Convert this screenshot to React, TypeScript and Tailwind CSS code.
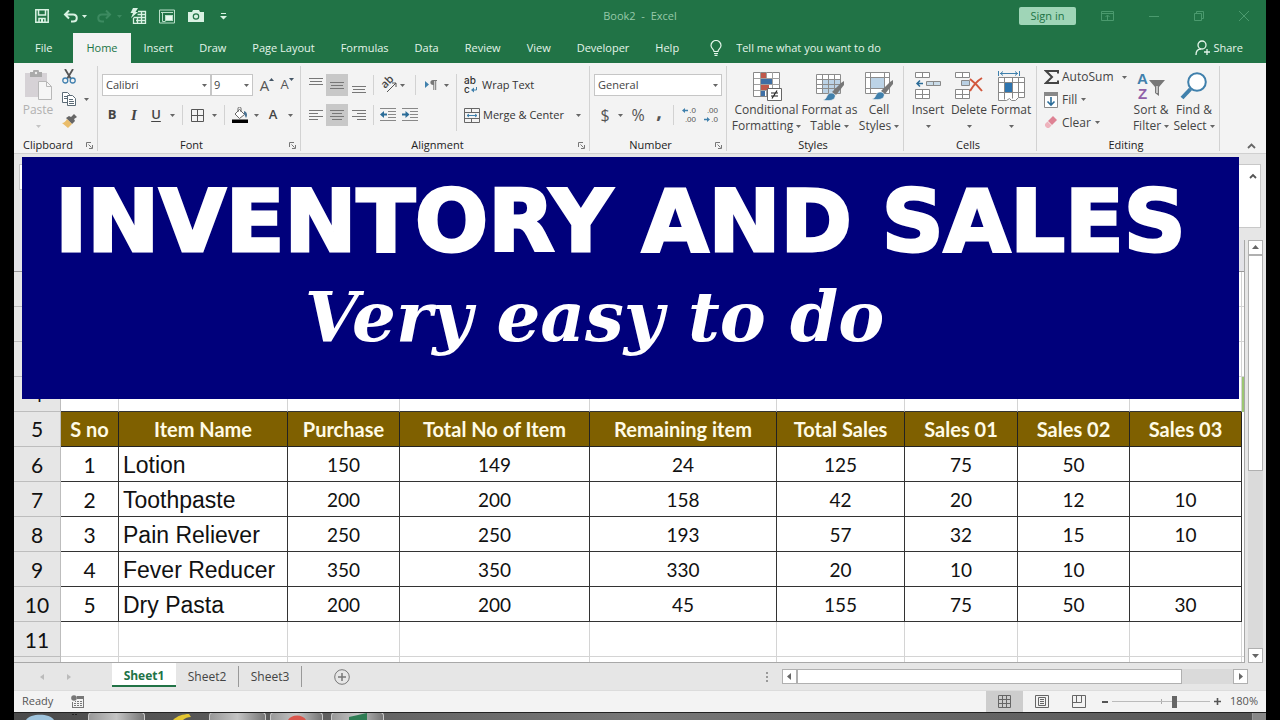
import React from "react";
import clsx from "clsx";

type Row = { no: number; sno: string; item: string; values: string[] };

const tabs = ["File", "Home", "Insert", "Draw", "Page Layout", "Formulas", "Data", "Review", "View", "Developer", "Help"];

const headers = ["S no", "Item Name", "Purchase", "Total No of Item", "Remaining item", "Total Sales", "Sales 01", "Sales 02", "Sales 03"];

const rows: Row[] = [
  { no: 6, sno: "1", item: "Lotion", values: ["150", "149", "24", "125", "75", "50", ""] },
  { no: 7, sno: "2", item: "Toothpaste", values: ["200", "200", "158", "42", "20", "12", "10"] },
  { no: 8, sno: "3", item: "Pain Reliever", values: ["250", "250", "193", "57", "32", "15", "10"] },
  { no: 9, sno: "4", item: "Fever Reducer", values: ["350", "350", "330", "20", "10", "10", ""] },
  { no: 10, sno: "5", item: "Dry Pasta", values: ["200", "200", "45", "155", "75", "50", "30"] },
];

function Caret({ className = "text-[#666]" }: { className?: string }) {
  return (
    <svg width="5" height="3" viewBox="0 0 5 3" className={clsx("shrink-0", className)}>
      <path d="M0 0h5L2.5 3z" fill="currentColor" />
    </svg>
  );
}

function CaretButton({ label, className }: { label: string; className: string }) {
  return (
    <button aria-label={label} className={clsx("flex h-full items-center justify-center", className)}>
      <Caret />
    </button>
  );
}

function Tool({ label, className, children }: { label: string; className?: string; children: React.ReactNode }) {
  return (
    <button aria-label={label} className={clsx("flex h-full shrink-0 items-center justify-center", className)}>
      {children}
    </button>
  );
}

function Group({ label, className, launcher, children }: { label: string; className: string; launcher?: boolean; children: React.ReactNode }) {
  return (
    <section aria-label={label} className={clsx("flex shrink-0 flex-col", className)}>
      <div className="flex flex-1 border-r border-[#d2d2d2]">{children}</div>
      <div className="flex h-3 items-center border-r border-[#d2d2d2] pr-1">
        <span className={clsx("flex-1 text-center leading-4 text-[#222]", launcher && "pr-1")}>{label}</span>
        {launcher && (
          <button aria-label={label + " settings"}>
            <svg width="7" height="7" viewBox="0 0 7 7" fill="none" stroke="#777">
              <path d="M.5 5V.5H5M2.5 2.5l3 3M6.5 3v3.5H3" />
            </svg>
          </button>
        )}
      </div>
    </section>
  );
}

function BigButton({ lines, className, icon }: { lines: string[]; className: string; icon: React.ReactNode }) {
  return (
    <button className={clsx("flex shrink-0 flex-col items-center whitespace-nowrap text-[12px] text-[#444]", className)}>
      <span className="flex h-8 items-center">{icon}</span>
      <span className="leading-4">{lines[0]}</span>
      <span className="flex h-4 items-center gap-[3px] leading-4">
        {lines[1]}
        <Caret />
      </span>
    </button>
  );
}

function Lines({ widths, align }: { widths: number[]; align: "l" | "c" | "r" }) {
  return (
    <svg width="14" height={widths.length * 3} viewBox={`0 0 14 ${widths.length * 3}`} stroke="#777">
      {widths.map((w, i) => {
        const x = align === "l" ? 0 : align === "r" ? 14 - w : (14 - w) / 2;
        return <path key={i} d={`M${x} ${i * 3 + 1.5}h${w}`} />;
      })}
    </svg>
  );
}

function Indent({ flip }: { flip?: boolean }) {
  return (
    <svg width="16" height="14" viewBox="0 0 16 14" fill="none">
      <path d="M0 .5h16M8 3.5h8M8 6.5h8M8 9.5h8M0 12.5h16" stroke="#888" />
      <path d={flip ? "M0 6.5h5" : "M2 6.5h5"} stroke="#2b6c98" strokeWidth="2" />
      <path d={flip ? "M3.5 3v7L7.5 6.5z" : "M4 3v7L0 6.5z"} fill="#2b6c98" />
    </svg>
  );
}

function Brush({ x, y }: { x: number; y: number }) {
  return (
    <g transform={`translate(${x} ${y})`}>
      <path d="M21 0v4l-8 10-4-3L18 2z" fill="#777" />
      <path d="M8 12c3 0 5 2 4 4-1 4-7 4-12 3 3-1 3-2 4-4 1-2 2-3 4-3z" fill="#4080ac" stroke="#f3f3f3" strokeWidth=".6" />
    </g>
  );
}

function TitleBar() {
  return (
    <header className="grid h-8 shrink-0 grid-cols-[1fr_auto_1fr] items-center text-white">
      <div className="flex items-center pl-[21px]">
        <Tool label="Save">
          <svg width="14" height="14" viewBox="0 0 14 14" fill="none" stroke="#d9f2e3" strokeWidth="1.5">
            <path d="M.8.8h12.4v12.4H.8zM3.5 1v5h7V1M4 13V9.5h6V13" />
            <path d="M7 10v3" strokeWidth="2" />
          </svg>
        </Tool>
        <Tool label="Undo" className="ml-[14px] gap-1">
          <svg width="15" height="13" viewBox="0 0 15 13" fill="none" stroke="#d9f2e3" strokeWidth="2">
            <path d="M1.5 4.5h8.5c5 0 5 7 0 7H8M6 .5L2 4.5l4 4" />
          </svg>
          <Caret className="text-[#d9f2e3]" />
        </Tool>
        <Tool label="Redo" className="ml-[10px] gap-[5px]">
          <svg width="15" height="13" viewBox="0 0 15 13" fill="none" stroke="#3c8a60" strokeWidth="2">
            <path d="M13.5 4.5H5c-5 0-5 7 0 7h2M9 .5l4 4-4 4" />
          </svg>
          <Caret className="text-[#3c8a60]" />
        </Tool>
        <Tool label="Calculate now" className="ml-2">
          <svg width="17" height="16" viewBox="0 0 17 16" fill="none" stroke="#d9f2e3">
            <path d="M8 3.5h7.5v12h-12V10M3.5 9.5h12M6 12.5h9.5M7.5 6.5h8M7.5 9v6.5M11.5 3.5v12" strokeWidth="1.3" />
            <path d="M3 0h5L5.5 4H8L1 10l2-5H.5z" fill="#d9f2e3" stroke="none" />
          </svg>
        </Tool>
        <Tool label="Form" className="ml-3">
          <svg width="16" height="15" viewBox="0 0 16 15" fill="none" stroke="#b9dfc8">
            <path d="M.5 1h15v13H.5zM2 3.5h12M3.5 3.5v9h3" />
            <rect x="6.500" y="6.500" width="7" height="5" fill="#e8f8ee" />
          </svg>
        </Tool>
        <Tool label="Camera" className="ml-[13px]">
          <svg width="16" height="12" viewBox="0 0 16 12">
            <path d="M0 2h4l1-2h6l1 2h4v10H0z" fill="#d9f2e3" />
            <circle cx="8" cy="6.5" r="2.7" fill="#d9f2e3" stroke="#217346" strokeWidth="1.2" />
          </svg>
        </Tool>
        <Tool label="Customize quick access toolbar" className="ml-4">
          <svg width="7" height="7" viewBox="0 0 7 7" fill="#d9f2e3">
            <path d="M1 0h5v1H1zM0 3h7L3.5 6.5z" />
          </svg>
        </Tool>
      </div>
      <h1 className="whitespace-pre text-[#96c9a9]">Book2  -  Excel</h1>
      <div className="flex items-center justify-end pr-[17px] text-[#4b9a6e]">
        <button className="mr-[25px] h-[18px] w-[57px] rounded-xs bg-[#9fd5b7] leading-4 text-[#217346]">Sign in</button>
        <Tool label="Ribbon display options" className="mr-[35px]">
          <svg width="13" height="10" viewBox="0 0 13 10" fill="none" stroke="currentColor">
            <path d="M.5.5h12v9H.5zM.5 2.5h12M6.5 9V4.5M4.5 6l2-2 2 2" />
          </svg>
        </Tool>
        <Tool label="Minimize" className="mr-[35px]">
          <svg width="10" height="10" viewBox="0 0 10 10" stroke="currentColor">
            <path d="M0 5.5h10" />
          </svg>
        </Tool>
        <Tool label="Restore" className="mr-[35px]">
          <svg width="10" height="10" viewBox="0 0 10 10" fill="none" stroke="currentColor">
            <path d="M.5 2.5h7v7h-7zM2.5 2.5v-2h7v7h-2" />
          </svg>
        </Tool>
        <Tool label="Close">
          <svg width="10" height="10" viewBox="0 0 10 10" stroke="currentColor">
            <path d="M0 0l10 10M10 0L0 10" />
          </svg>
        </Tool>
      </div>
    </header>
  );
}

function TabBar() {
  return (
    <nav className="flex h-[31px] shrink-0 items-end pl-2 pr-[23px] text-[#e4f5ea]">
      {tabs.map((tab) => (
        <button
          key={tab}
          className={clsx(
            "h-[30px] whitespace-nowrap px-[13px]",
            tab === "Home" && "bg-[#f3f3f3] text-[#217346]",
            tab === "File" && "mr-2"
          )}
        >
          {tab}
        </button>
      ))}
      <label className="ml-[18px] flex h-[30px] flex-1 items-center gap-[14px]">
        <svg width="12" height="16" viewBox="0 0 12 16" fill="none" stroke="#e4f5ea" strokeWidth="1.2">
          <path d="M4 11.5C4 9 1 8.5 1 5.5a5 5 0 0 1 10 0c0 3-3 3.5-3 6zM4 13.5h4M4.5 15.3h3" />
        </svg>
        <input
          aria-label="Tell me what you want to do"
          placeholder="Tell me what you want to do"
          className="flex-1 bg-transparent font-medium outline-none placeholder:text-[#e4f5ea]"
        />
      </label>
      <button className="flex h-[30px] items-center gap-[3px]">
        <svg width="15" height="16" viewBox="0 0 15 16" fill="none" stroke="#e4f5ea" strokeWidth="1.3">
          <circle cx="7" cy="5" r="4" />
          <path d="M1 15c0-4 2-6 5-6M9 12h6M12 9v6" />
        </svg>
        Share
      </button>
    </nav>
  );
}

function ClipboardGroup() {
  return (
    <Group label="Clipboard" className="w-[84px]" launcher>
      <button className="flex w-[48px] flex-col items-center pt-1 text-[12px] text-[#b1b1b1]">
        <svg width="28" height="30" viewBox="0 0 28 30">
          <path d="M1 3h22v24H1z" fill="#d6d2d6" />
          <path d="M6 2h3a3 3 0 0 1 6 0h3v5H6z" fill="#aaa" />
          <circle cx="12" cy="3" r="1.2" fill="#eee" />
          <path d="M14.5 11.5h8l5 5v13h-13z" fill="#f6f6f6" stroke="#b8b8b8" />
          <path d="M22.5 11.5v5h5" fill="none" stroke="#b8b8b8" />
        </svg>
        <span className="mt-[2px] leading-4">Paste</span>
        <span className="flex h-4 items-center">
          <Caret className="text-[#c4c4c4]" />
        </span>
      </button>
      <div className="flex flex-col gap-2 pt-[3px]">
        <Tool label="Cut" className="h-[15px]! w-[14px]">
          <svg width="14" height="15" viewBox="0 0 14 15" fill="none">
            <path d="M3 0l6 10M11 0L5 10" stroke="#555" strokeWidth="1.8" />
            <circle cx="3.3" cy="11.5" r="2.5" stroke="#3f7fae" strokeWidth="1.3" />
            <circle cx="10.7" cy="11.5" r="2.5" stroke="#3f7fae" strokeWidth="1.3" />
          </svg>
        </Tool>
        <div className="flex items-center gap-2">
          <Tool label="Copy">
            <svg width="14" height="14" viewBox="0 0 14 14" fill="#fff" stroke="#5b6b76">
              <path d="M.5.5h5l2 2v8h-7zM2 4.5h3M2 6.5h3" />
              <path d="M5.5 3.5h5l3 3v7h-8zM7 7.5h4M7 9.5h5M7 11.5h5" />
            </svg>
          </Tool>
          <CaretButton label="Copy options" className="w-1" />
        </div>
        <Tool label="Format painter" className="h-[14px]! w-[15px]">
          <svg width="15" height="14" viewBox="0 0 15 14">
            <path d="M12 0l3 3-3 2 1 2-3 3-6-6 3-2 2 1z" fill="#666" />
            <path d="M5 5l5 5-4 4-6-5c2 0 4-2 5-4z" fill="#eabd6b" />
          </svg>
        </Tool>
      </div>
    </Group>
  );
}

function FontGroup() {
  return (
    <Group label="Font" className="w-[203px]" launcher>
      <div className="flex flex-col gap-2 pl-1 pt-2">
        <div className="flex h-[22px] items-center">
          <span className="relative flex items-center">
            <select aria-label="Font name" className="h-[22px] w-[109px] appearance-none border border-[#c6c6c6] bg-white px-[3px] text-[#444]">
              <option>Calibri</option>
            </select>
            <Caret className="pointer-events-none absolute right-1 text-[#666]" />
          </span>
          <span className="relative flex items-center">
            <select aria-label="Font size" className="h-[22px] w-[42px] appearance-none border border-[#c6c6c6] bg-white px-[2px] text-[#444]">
              <option>9</option>
            </select>
            <Caret className="pointer-events-none absolute right-1 text-[#666]" />
          </span>
          <Tool label="Increase font size" className="w-6 pl-1 text-[15px] text-[#555]">
            A
            <svg width="5" height="3" viewBox="0 0 5 3" className="mb-3">
              <path d="M0 3h5L2.5 0z" fill="#456" />
            </svg>
          </Tool>
          <Tool label="Decrease font size" className="w-5 text-[13px] text-[#555]">
            A
            <Caret className="mb-3 text-[#456]" />
          </Tool>
        </div>
        <div className="flex h-[22px] items-center text-[13px] text-[#444]">
          <Tool label="Bold" className="w-5 font-bold">B</Tool>
          <Tool label="Italic" className="w-6">
            <i className="font-['Liberation_Serif',serif] text-[15px] font-bold">I</i>
          </Tool>
          <Tool label="Underline" className="w-5 font-semibold underline underline-offset-2">U</Tool>
          <CaretButton label="Underline styles" className="w-3" />
          <span className="mx-1 h-5 w-px bg-[#d2d2d2]" />
          <Tool label="Borders" className="w-5">
            <svg width="13" height="13" viewBox="0 0 13 13" fill="none" stroke="#555">
              <path d="M.5.5h12v12H.5zM6.5 0v13M0 6.5h13" />
            </svg>
          </Tool>
          <CaretButton label="Border styles" className="w-[14px]" />
          <span className="mx-[3px] h-5 w-px bg-[#d2d2d2]" />
          <Tool label="Fill color" className="w-6">
            <svg width="16" height="16" viewBox="0 0 16 16" fill="none">
              <path d="M7.5 2.5l5 5-5 4-4.5-4.5z" fill="#fff" stroke="#666" />
              <path d="M6 5V1.5c0-2 3-2 3 0V5" stroke="#666" />
              <path d="M12 4c3 1 4 4 2 7-1-2-1-3-2-4z" fill="#4a7394" />
              <path d="M0 12.5h16V16H0z" fill="#000" />
            </svg>
          </Tool>
          <CaretButton label="Fill colors" className="w-2" />
          <Tool label="Font color" className="w-[26px] font-semibold">A</Tool>
          <CaretButton label="Font colors" className="w-2" />
        </div>
      </div>
    </Group>
  );
}

function AlignmentGroup() {
  return (
    <Group label="Alignment" className="w-[289px]" launcher>
      <div className="my-2 flex w-[156px] flex-col gap-2 border-r border-[#d2d2d2] pl-1">
        <div className="flex h-[22px] items-center">
          <Tool label="Top align" className="w-[21px] pb-2"><Lines widths={[14, 12, 14]} align="c" /></Tool>
          <Tool label="Middle align" className="w-[22px] bg-[#c8c8c8]"><Lines widths={[14, 12, 14]} align="c" /></Tool>
          <Tool label="Bottom align" className="w-[21px] pt-2"><Lines widths={[14, 12, 14]} align="c" /></Tool>
          <span className="ml-1 mr-[6px] h-5 w-px bg-[#d2d2d2]" />
          <Tool label="Orientation" className="w-4">
            <svg width="17" height="16" viewBox="0 0 17 16" fill="none" className="overflow-visible">
              <text x="0" y="0" transform="translate(5 12) rotate(-45)" fontSize="11" fontWeight="600" fill="#444">ab</text>
              <path d="M7 15L16 6M12 6h4v4" stroke="#555" />
            </svg>
          </Tool>
          <CaretButton label="Orientation options" className="w-3" />
          <span className="ml-[7px] mr-[6px] h-5 w-px bg-[#d2d2d2]" />
          <Tool label="Text direction" className="w-[18px]">
            <svg width="12" height="10" viewBox="0 0 12 10">
              <path d="M0 1l4 3.5L0 8z" fill="#4080ac" />
              <path d="M8 0h4v1h-.8v9h-1V1h-.9v9h-1V5C4.5 5 4.5 0 8 0z" fill="#777" />
            </svg>
          </Tool>
          <CaretButton label="Text direction options" className="w-3" />
        </div>
        <div className="flex h-[22px] items-center">
          <Tool label="Align left" className="w-[21px]"><Lines widths={[14, 9, 14, 9]} align="l" /></Tool>
          <Tool label="Center" className="w-[22px] bg-[#c8c8c8]"><Lines widths={[14, 10, 14, 10]} align="c" /></Tool>
          <Tool label="Align right" className="w-[21px]"><Lines widths={[14, 9, 14, 9]} align="r" /></Tool>
          <span className="ml-1 mr-[6px] h-5 w-px bg-[#d2d2d2]" />
          <Tool label="Decrease indent" className="w-4"><Indent /></Tool>
          <Tool label="Increase indent" className="w-7"><Indent flip /></Tool>
        </div>
      </div>
      <div className="flex flex-col gap-2 pl-[7px] pt-2 text-[#333]">
        <button className="flex h-[22px] items-center gap-1">
          <span className="flex w-[14px] flex-col items-start font-['Inter',sans-serif] text-[10px] font-medium leading-[9px]">
            <span>ab</span>
            <span className="flex items-center gap-px">
              c
              <svg width="6" height="6" viewBox="0 0 6 6">
                <path d="M5.5 0v3H3" stroke="#4080ac" fill="none" />
                <path d="M0 3l3-2.500v5z" fill="#4080ac" />
              </svg>
            </span>
          </span>
          Wrap Text
        </button>
        <div className="flex h-[22px] items-center">
          <button className="flex w-[106px] items-center gap-[3px] whitespace-nowrap">
            <svg width="16" height="15" viewBox="0 0 16 15" fill="none" stroke="#666">
              <path d="M.5.5h15v14H.5zM.5 4.5h15M.5 10.5h15M7.5.5v4M7.5 10.5v4" />
              <path d="M3 7.5h10M5 6L3 7.5 5 9M11 6l2 1.5L11 9" stroke="#4080ac" />
            </svg>
            Merge &amp; Center
          </button>
          <CaretButton label="Merge options" className="w-4" />
        </div>
      </div>
    </Group>
  );
}

function DecimalIcon({ top, bottom, arrow }: { top: string; bottom: string; arrow: "left" | "right" }) {
  const mark = (
    <svg width="6" height="5" viewBox="0 0 6 5" fill="#4080ac">
      <path d={arrow === "left" ? "M0 2.5L3 0v1.8h3v1.4H3V5z" : "M6 2.5L3 0v1.8H0v1.4h3V5z"} />
    </svg>
  );
  return (
    <span className="flex w-[15px] flex-col items-end font-['Liberation_Sans',sans-serif] text-[8px] leading-[9px]">
      <span className="flex items-center gap-px">{arrow === "left" && mark}{top}</span>
      <span className="flex items-center gap-px">{arrow === "right" && mark}{bottom}</span>
    </span>
  );
}

function NumberGroup() {
  return (
    <Group label="Number" className="w-[137px]" launcher>
      <div className="flex flex-col gap-2 pl-1 pt-2">
        <span className="relative flex items-center">
          <select aria-label="Number format" className="h-[22px] w-[128px] appearance-none border border-[#c6c6c6] bg-white px-[3px] text-[#444]">
            <option>General</option>
          </select>
          <Caret className="pointer-events-none absolute right-1 text-[#666]" />
        </span>
        <div className="flex h-[22px] items-center text-[#555]">
          <Tool label="Accounting format" className="w-[22px] text-[16px]">$</Tool>
          <CaretButton label="Currencies" className="w-2" />
          <Tool label="Percent style" className="w-[28px] text-[16px]">%</Tool>
          <Tool label="Comma style" className="w-[14px] pb-2 text-[20px] font-bold">,</Tool>
          <span className="mx-[7px] h-5 w-px bg-[#d2d2d2]" />
          <Tool label="Increase decimal"><DecimalIcon top=".0" bottom=".00" arrow="left" /></Tool>
          <Tool label="Decrease decimal" className="ml-[7px]"><DecimalIcon top=".00" bottom=".0" arrow="right" /></Tool>
        </div>
      </div>
    </Group>
  );
}

function StylesGroup() {
  return (
    <Group label="Styles" className="w-[177px]">
      <div className="flex pl-1 pt-1">
        <BigButton
          className="w-[71px]"
          lines={["Conditional", "Formatting"]}
          icon={
            <svg width="30" height="30" viewBox="0 0 30 30" fill="none">
              <path d="M1.5 1.5h26v24h-26z" fill="#fff" stroke="#888" />
              <path d="M2 7.5h26M2 13.5h26M2 19.5h26M8.5 1v24M14.5 1v24M20.5 1v24" stroke="#a0a0a0" />
              <path d="M9 2h5v5H9zM9 14h8v5H9z" fill="#c0594b" />
              <path d="M9 8h11v5H9zM9 20h4v5H9z" fill="#3e6fa5" />
              <path d="M15.5 17.5h14v12h-14z" fill="#fff" stroke="#666" />
              <path d="M19 22h7M19 25h7M25 19.5l-5 8" stroke="#222" strokeWidth="1.2" />
            </svg>
          }
        />
        <BigButton
          className="w-[55px]"
          lines={["Format as", "Table"]}
          icon={
            <svg width="30" height="30" viewBox="0 0 30 30" fill="none">
              <path d="M1.5 3.5h24v19h-24z" fill="#fff" />
              <path d="M8 8h17v14H8z" fill="#bcd3e6" />
              <path d="M1.5 3.5h24v19h-24zM1.5 8.5h24M1.5 13.5h24M1.5 17.5h24M7.5 3.5v19M13.5 3.5v19M19.5 3.5v19" stroke="#8c8c8c" />
              <Brush x={8} y={10} />
            </svg>
          }
        />
        <BigButton
          className="w-[44px]"
          lines={["Cell", "Styles"]}
          icon={
            <svg width="30" height="30" viewBox="0 0 30 30" fill="none">
              <path d="M1.5 1.5h24v21h-24z" fill="#fff" />
              <path d="M1.5 1.5h24v21h-24zM1.5 6.5h24M1.5 17.5h24M6.5 1.5v21M20.5 1.5v21" stroke="#8c8c8c" />
              <path d="M7 7h13v10H7z" fill="#bcd3e6" />
              <Brush x={8} y={9} />
            </svg>
          }
        />
      </div>
    </Group>
  );
}

function CellsGroup() {
  return (
    <Group label="Cells" className="w-[133px]">
      <div className="flex pl-1 pt-1">
        <BigButton
          className="w-[40px] [&>span:last-child]:gap-0"
          lines={["Insert", ""]}
          icon={
            <svg width="26" height="28" viewBox="0 0 26 28" fill="#fff" stroke="#888">
              <path d="M.5.5h14v5H.5zM7.5.5v5M.5 17.5h14v9H.5zM7.5 17.5v9M.5 22.5h14" />
              <path d="M11.5 9.5h14v4h-14zM18.5 9.5v4" fill="#c9dbe8" />
              <path d="M2 11.5h6M5 8.5l-3 3 3 3" fill="none" stroke="#2b6c98" strokeWidth="1.5" />
            </svg>
          }
        />
        <BigButton
          className="w-[42px] [&>span:last-child]:gap-0"
          lines={["Delete", ""]}
          icon={
            <svg width="30" height="28" viewBox="0 0 30 28" fill="#fff" stroke="#888">
              <path d="M1.5.5h14v5h-14zM8.5.5v5M1.5 17.5h14v9h-14zM8.5 17.5v9M1.5 22.5h14" />
              <path d="M7.5 8.5h8v5h-8z" fill="#b9cfe2" />
              <path d="M16 7c4 3 8 7 12 12M28 6c-5 3-9 8-12 13" fill="none" stroke="#d2583d" strokeWidth="2" />
            </svg>
          }
        />
        <BigButton
          className="w-[42px] [&>span:last-child]:gap-0"
          lines={["Format", ""]}
          icon={
            <svg width="28" height="31" viewBox="0 0 28 31" fill="none" stroke="#888">
              <path d="M1.5 6.5h26v20h-6l-3 3h-4l-2-2-3 2h-8z" fill="#fff" />
              <path d="M1.5 11.5h26M1.5 21.5h26M7.5 6.5v22M15.5 6.5v21M21.5 6.5v20" />
              <path d="M8 12h7v9H8z" fill="#2e75b0" stroke="none" />
              <path d="M1.5 0v5M22.5 0v5M3 2.5h18M6 .5l-2.5 2L6 4.5M18 .5l2.5 2-2.5 2" stroke="#4080ac" />
            </svg>
          }
        />
      </div>
    </Group>
  );
}

function EditingGroup() {
  return (
    <Group label="Editing" className="w-[183px]">
      <div className="flex w-[90px] flex-col pl-[7px] text-[12px] text-[#444]">
        <button className="flex h-[22px] items-center gap-[3px]">
          <svg width="15" height="14" viewBox="0 0 15 14" fill="none" stroke="#444" strokeWidth="2">
            <path d="M14 3.5V1H2l6 6-6 6h12v-2.5" />
          </svg>
          AutoSum
          <span className="ml-auto"><Caret /></span>
        </button>
        <button className="flex h-[23px] items-center gap-1">
          <svg width="14" height="16" viewBox="0 0 14 16" fill="none">
            <path d="M.5.5h13v15H.5z" fill="#fff" stroke="#888" />
            <path d="M0 0h14v4H0z" fill="#888" />
            <path d="M7 5v8M3.5 9.5L7 13l3.5-3.5" stroke="#2b6c98" strokeWidth="1.6" />
          </svg>
          Fill
          <Caret />
        </button>
        <button className="flex h-[23px] items-center gap-1">
          <svg width="14" height="13" viewBox="0 0 14 13">
            <path d="M9 0l4 4-5 5-4-4z" fill="#de8294" />
            <path d="M3.5 5.5l4 4-2.5 2.5H3L1 10V8z" fill="#eeb3bd" />
          </svg>
          Clear
          <Caret />
        </button>
      </div>
      <div className="flex pt-1">
        <BigButton
          className="w-[48px]"
          lines={["Sort &", "Filter"]}
          icon={
            <svg width="28" height="28" viewBox="0 0 28 28" fontSize="15" fontWeight="600" className="overflow-visible font-['Liberation_Sans',sans-serif]">
              <text x="0" y="12" fill="#4080ac">A</text>
              <text x="1" y="27" fill="#9060a8">Z</text>
              <path d="M12 8h16l-6 7v9l-4-3v-6z" fill="#777" />
              <path d="M20 14v7" stroke="#ddd" strokeWidth="1.5" />
            </svg>
          }
        />
        <BigButton
          className="w-[38px]"
          lines={["Find &", "Select"]}
          icon={
            <svg width="28" height="28" viewBox="0 0 28 28" fill="none" stroke="#4080ac">
              <circle cx="17" cy="10" r="8.8" fill="#fff" strokeWidth="2" />
              <path d="M10.5 17L2 26" strokeWidth="4" />
            </svg>
          }
        />
      </div>
    </Group>
  );
}

function SheetTable() {
  const side = "border-r border-b border-[#bdbdbd] bg-[#e6e6e6] text-center text-[21px] font-normal";
  const blank = "border-r border-b border-[#d4d4d4]";
  const cell = "border-r border-b border-[#333]";

  return (
    <table className="w-full table-fixed border-separate border-spacing-0 bg-white font-['Lato',sans-serif] leading-[30px] text-[#111]">
      <colgroup>
        <col className="w-[47px]" />
        <col className="w-[58px]" />
        <col className="w-[169px]" />
        <col className="w-[112px]" />
        <col className="w-[190px]" />
        <col className="w-[187px]" />
        <col className="w-[128px]" />
        <col className="w-[113px]" />
        <col className="w-[112px]" />
        <col className="w-[112px]" />
        <col className="w-[2px]" />
      </colgroup>
      <tbody>
        {[1, 2, 3, 4].map((no) => (
          <tr key={no} className="h-[35px]">
            <th scope="row" className={clsx(side, "p-0")}>{no}</th>
            {headers.map((h) => (
              <td key={h} className={clsx(blank, "p-0", no === 4 && "border-b-[#333]")} />
            ))}
            <td className={clsx("p-0", no === 4 ? "bg-[#9cc673]" : "border-b border-[#d4d4d4]")} />
          </tr>
        ))}
        <tr className="h-[35px]">
          <th scope="row" className={clsx(side, "p-0")}>5</th>
          {headers.map((h) => (
            <th key={h} scope="col" className="whitespace-nowrap border-b border-r border-[#222] bg-[#7f6000] p-0 text-[20px] font-bold text-[#fffbe6]">
              {h}
            </th>
          ))}
          <td className="p-0" />
        </tr>
        {rows.map((row) => (
          <tr key={row.no} className="h-[35px]">
            <th scope="row" className={clsx(side, "p-0 pt-[2px]")}>{row.no}</th>
            <td className={clsx(cell, "p-0 pt-[2px] text-center text-[21px]")}>{row.sno}</td>
            <td className={clsx(cell, "whitespace-nowrap p-0 pl-1 pt-[2px] font-['Liberation_Sans',sans-serif] text-[23px]")}>{row.item}</td>
            {row.values.map((v, i) => (
              <td key={i} className={clsx(cell, "p-0 pt-[2px] text-center text-[19px]")}>{v}</td>
            ))}
            <td className="p-0" />
          </tr>
        ))}
        <tr className="h-[35px]">
          <th scope="row" className={clsx(side, "p-0 pt-[2px]")}>11</th>
          {headers.map((h) => (
            <td key={h} className={clsx(blank, "p-0")} />
          ))}
          <td className="border-b border-[#d4d4d4] p-0" />
        </tr>
        <tr className="h-[35px]">
          <td className={clsx(side, "p-0")} />
          {headers.map((h) => (
            <td key={h} className={clsx(blank, "p-0")} />
          ))}
          <td className="p-0" />
        </tr>
      </tbody>
    </table>
  );
}

function ScrollArrow({ label, d }: { label: string; d: string }) {
  return (
    <button aria-label={label} className="flex size-[15px] shrink-0 items-center justify-center border border-[#b0b0b0] bg-white">
      <svg width="7" height="7" viewBox="0 0 7 7" fill="#666">
        <path d={d} />
      </svg>
    </button>
  );
}

function Workbook() {
  return (
    <main className="relative flex min-h-0 flex-1 flex-col border-t border-[#d0d0d0] bg-[#e6e6e6]">
      <div className="flex h-[86px] shrink-0 justify-between pb-3 pl-[5px] pr-[5px] pt-[10px]">
        <div className="h-[26px] w-[120px] border border-[#c8c8c8] bg-white" />
        <div className="flex w-[900px] justify-end border border-[#c8c8c8] bg-white pr-[3px] pt-[7px]">
          <button aria-label="Collapse formula bar" className="h-2">
            <svg width="8" height="6" viewBox="0 0 8 6" fill="none" stroke="#555" strokeWidth="1.8" className="block">
              <path d="M1 5l3-3 3 3" />
            </svg>
          </button>
        </div>
      </div>
      <div className="flex min-h-0 flex-1">
        <div className="min-w-0 flex-1 overflow-hidden border-b border-r border-[#a8a8a8]">
          <div className="h-8 border-b border-[#999] bg-[#e3e3e8]" />
          <SheetTable />
        </div>
        <div className="flex w-[21px] shrink-0 flex-col bg-[#e6e6e6] pl-[3px]">
          <ScrollArrow label="Scroll up" d="M0 5h7L3.5 1z" />
          <div className="flex w-[15px] flex-1 flex-col bg-[#dadada]">
            <div className="h-[55%] border border-[#b0b0b0] bg-white" />
          </div>
          <ScrollArrow label="Scroll down" d="M0 2h7L3.5 6z" />
        </div>
      </div>

      {/* Title card over the sheet */}
      <div className="absolute left-2 right-[27px] top-[3px] flex h-[242px] flex-col items-center bg-[#00007b] text-white">
        <h2 className="mr-5 mt-4 whitespace-nowrap font-['DejaVu_Sans',sans-serif] text-[86px] font-bold leading-[96px] [-webkit-text-stroke:3px_white]">
          INVENTORY AND SALES
        </h2>
        <p className="mr-[72px] whitespace-nowrap font-['DejaVu_Serif',serif] text-[69px] font-bold italic leading-[96px]">Very easy to do</p>
      </div>
    </main>
  );
}

function SheetTabs() {
  return (
    <div className="flex h-[27px] shrink-0 bg-[#e6e6e6] text-[12px] text-[#444]">
      <div className="flex w-[98px] items-center gap-[23px] pl-[26px]">
        <button aria-label="Previous sheet">
          <svg width="4" height="6" viewBox="0 0 4 6"><path d="M4 0v6L0 3z" fill="#bbb" /></svg>
        </button>
        <button aria-label="Next sheet">
          <svg width="4" height="6" viewBox="0 0 4 6"><path d="M0 0v6l4-3z" fill="#bbb" /></svg>
        </button>
      </div>
      <button className="h-6 w-[64px] border-b-2 border-[#217346] bg-white pt-1 font-bold text-[#217346]">Sheet1</button>
      <button className="my-[3px] w-[63px] border-r border-[#999] leading-5">Sheet2</button>
      <button className="my-[3px] w-[63px] border-r border-[#999] leading-5">Sheet3</button>
      <button aria-label="New sheet" className="ml-8">
        <svg width="16" height="16" viewBox="0 0 16 16" fill="none" stroke="#777">
          <circle cx="8" cy="8" r="7.3" />
          <path d="M8 4v8M4 8h8" strokeWidth="1.5" />
        </svg>
      </button>
      <div className="ml-auto flex items-center pr-[18px]">
        <svg width="2" height="10" viewBox="0 0 2 10" fill="#999" className="mr-[14px]">
          <path d="M0 0h2v2H0zM0 4h2v2H0zM0 8h2v2H0z" />
        </svg>
        <ScrollArrow label="Scroll left" d="M5 0v7L1 3.5z" />
        <div className="h-[15px] w-[385px] border border-[#b0b0b0] bg-white" />
        <div className="h-[15px] w-[51px] bg-[#dadada]" />
        <ScrollArrow label="Scroll right" d="M2 0v7l4-3.5z" />
      </div>
    </div>
  );
}

function StatusBar() {
  return (
    <footer className="flex h-[22px] shrink-0 items-center border-t border-[#dcdcdc] bg-[#f3f3f3] px-2 text-[#555]">
      <span className="w-[49px]">Ready</span>
      <button aria-label="Record macro">
        <svg width="13" height="13" viewBox="0 0 13 13" fill="#777">
          <circle cx="3" cy="3" r="2.8" />
          <path d="M6 1h7v3H6zM1 7h1v6H1zM1 12h12v1H1zM12 4h1v9h-1zM4 6h1v1H4zM6 6h2v1H6zM9 6h2v1H9zM3 8h2v1H3zM6 8h2v1H6zM9 8h2v1H9zM3 10h2v1H3zM6 10h2v1H6zM9 10h2v1H9z" />
        </svg>
      </button>
      <div className="ml-auto flex h-full items-center">
        <Tool label="Normal view" className="w-[37px] bg-[#cdcdcd]">
          <svg width="13" height="13" viewBox="0 0 13 13" fill="none" stroke="#666">
            <path d="M.5.5h12v12H.5zM4.5.5v12M8.5.5v12M.5 4.5h12M.5 8.5h12" />
          </svg>
        </Tool>
        <Tool label="Page layout view" className="w-[37px]">
          <svg width="14" height="13" viewBox="0 0 14 13" fill="none" stroke="#666">
            <path d="M.5.5h13v12H.5zM3.5 2.5h7v8h-7zM5 4.5h4M5 6.5h4M5 8.5h4" />
          </svg>
        </Tool>
        <Tool label="Page break preview" className="w-[38px]">
          <svg width="14" height="13" viewBox="0 0 14 13" fill="none" stroke="#666">
            <path d="M.5.5h13v12H.5zM4.5.5v7M9.5.5v7h-9" />
          </svg>
        </Tool>
        <button aria-label="Zoom out" className="ml-1">
          <svg width="6" height="6" viewBox="0 0 6 6"><path d="M0 2h6v2H0z" fill="#555" /></svg>
        </button>
        <span className="relative mx-1 flex items-center">
          <span className="absolute left-1/2 h-[5px] w-px bg-[#aaa]" />
          <input
            type="range"
            aria-label="Zoom"
            min={0}
            max={100}
            defaultValue={64}
            className="relative h-3 w-[98px] appearance-none bg-[linear-gradient(#bbb,#bbb)] bg-[length:100%_1px] bg-center bg-no-repeat [&::-webkit-slider-thumb]:h-3 [&::-webkit-slider-thumb]:w-[5px] [&::-webkit-slider-thumb]:appearance-none [&::-webkit-slider-thumb]:bg-[#666]"
          />
        </span>
        <button aria-label="Zoom in" className="mr-[9px]">
          <svg width="7" height="7" viewBox="0 0 7 7"><path d="M0 2.7h7v1.6H0zM2.7 0h1.6v7H2.7z" fill="#555" /></svg>
        </button>
        <span>180%</span>
      </div>
    </footer>
  );
}

function Taskbar() {
  const item = "h-2 rounded-t-sm border border-b-0 border-[#ccc] bg-linear-to-r from-[#9a9a9a] via-[#c4c4c4] to-[#777]";
  return (
    <div className="flex h-2 shrink-0 items-end overflow-hidden border-t border-[#222] bg-linear-to-r from-[#4a4a4a] via-[#777] to-[#555]">
      <svg width="74" height="7" viewBox="0 0 74 7">
        <path d="M12 7C16 0 36 0 40 7z" fill="#9fc4dd" />
        <path d="M58 1h2v1h-2zM61 1h2v1h-2z" fill="#222" />
      </svg>
      <div className={clsx(item, "w-[57px]")} />
      <svg width="64" height="7" viewBox="0 0 64 7">
        <path d="M28 7c4-4 10-6 16-6l2 3c-3 0-6 1-8 3z" fill="#e3c632" />
      </svg>
      <div className={clsx(item, "w-[57px]")} />
      <div className={clsx(item, "ml-1 flex w-[53px] justify-center")}>
        <svg width="18" height="7" viewBox="0 0 18 7"><path d="M0 7C3 1 15 1 18 7z" fill="#d9564c" /></svg>
      </div>
      <div className={clsx(item, "ml-2 flex w-[53px] justify-center")}>
        <svg width="18" height="7" viewBox="0 0 18 7"><path d="M0 4l18-4v7H0z" fill="#2f7d54" /></svg>
      </div>
      <div className="ml-auto h-2 w-[14px] border-l border-[#999] bg-[#888]" />
    </div>
  );
}

export default function App() {
  return (
    <div className="flex h-screen flex-col overflow-hidden bg-black px-[14px] font-['Open_Sans',sans-serif] text-[11px] text-[#333]">
      <div className="shrink-0 bg-[#217346]">
        <TitleBar />
        <TabBar />
      </div>
      <div className="flex h-[90px] shrink-0 bg-[#f3f3f3] pb-[2px] pt-[3px]">
        <ClipboardGroup />
        <FontGroup />
        <AlignmentGroup />
        <NumberGroup />
        <StylesGroup />
        <CellsGroup />
        <EditingGroup />
        <div className="flex flex-1 items-end justify-end pb-[2px] pr-[10px]">
          <button aria-label="Collapse ribbon">
            <svg width="9" height="6" viewBox="0 0 9 6" fill="none" stroke="#666" strokeWidth="1.8">
              <path d="M1 5l3.5-3.5L8 5" />
            </svg>
          </button>
        </div>
      </div>
      <Workbook />
      <SheetTabs />
      <StatusBar />
      <Taskbar />
    </div>
  );
}
